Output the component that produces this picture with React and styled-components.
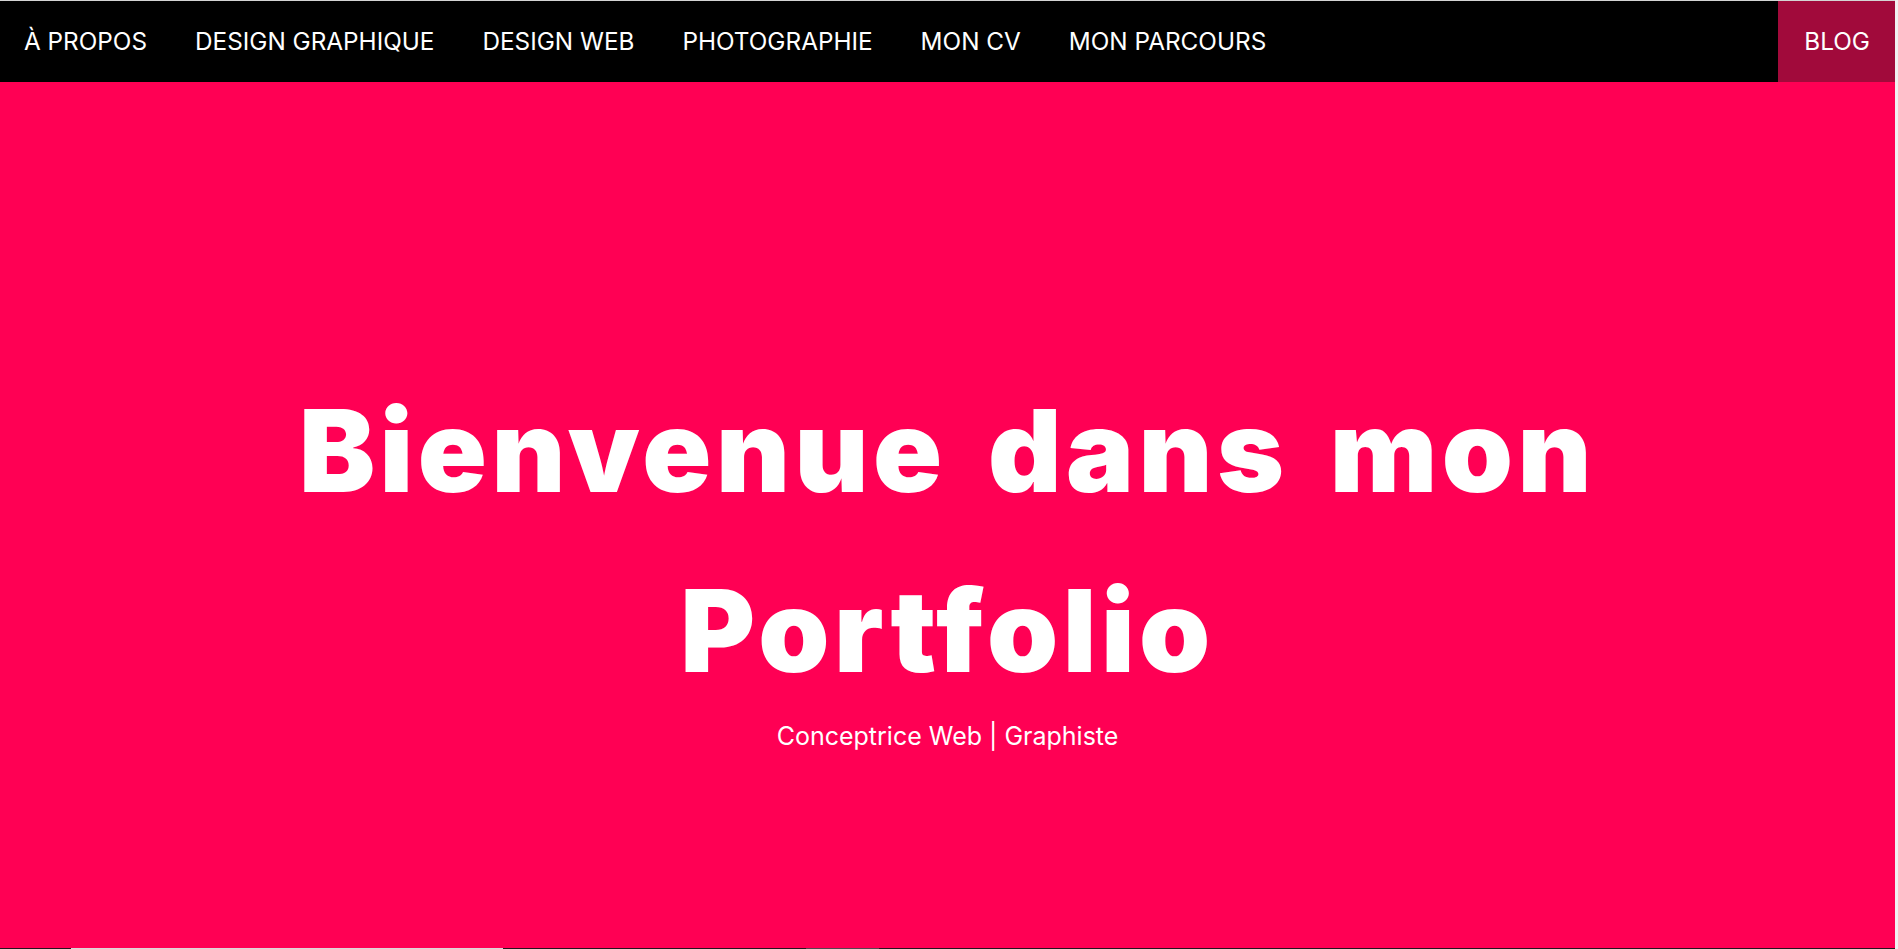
import React from "react";
import styled, { createGlobalStyle } from "styled-components";

const Global = createGlobalStyle`
  html, body { margin: 0; padding: 0; background: #f1f1f1; overflow: hidden; }
  body { font-family: Inter, "Noto Sans", sans-serif; }
  * { box-sizing: border-box; }
`;

const Page = styled.div`
  width: calc(100% - 3px);
  height: 949px;
  display: flex;
  flex-direction: column;
  overflow: hidden;
  border-top: 1px solid #d4d4d4;
`;

const NavBar = styled.nav`
  height: 81px;
  flex: 0 0 auto;
  background: #000;
  display: flex;
  align-items: stretch;
  justify-content: space-between;
`;

const NavList = styled.ul`
  list-style: none;
  margin: 0;
  padding: 0;
  display: flex;
  align-items: stretch;
`;

const NavItem = styled.li`
  display: flex;
`;

const NavLink = styled.a`
  display: flex;
  align-items: center;
  height: 100%;
  padding-bottom: 2px;
  color: #fff;
  text-decoration: none;
  font-family: Inter, sans-serif;
  font-size: 24.3px;
  font-weight: 400;
  background: ${(p) => (p.$accent ? "#a10a3b" : "transparent")};
  padding-left: ${(p) => (p.$accent ? "26px" : "24px")};
  padding-right: ${(p) => (p.$accent ? "25px" : "24px")};
`;

const Hero = styled.section`
  flex: 1 1 auto;
  background: #ff0054;
  display: flex;
  flex-direction: column;
  align-items: center;
  justify-content: center;
  color: #fff;
  text-align: center;
  padding-top: 82px;
`;

const Title = styled.h1`
  margin: 0;
  font-family: Inter, sans-serif;
  font-weight: 900;
  font-size: 114px;
  line-height: 180px;
  letter-spacing: 4.5px;
  word-spacing: 14px;
  font-variant-ligatures: none;
  font-feature-settings: "calt" 0, "liga" 0;
`;

const Subtitle = styled.p`
  margin: 0;
  font-family: Inter, sans-serif;
  font-weight: 400;
  font-size: 25px;
  line-height: 30px;
`;

const NextSection = styled.section`
  flex: 0 0 1px;
  background: #24141c;
  display: flex;
  padding-left: 71px;
`;

const Thumb = styled.div`
  width: ${(p) => p.$w}px;
  margin-right: ${(p) => p.$mr}px;
  background: ${(p) => p.$c};
`;

const items = [
  "À PROPOS",
  "DESIGN GRAPHIQUE",
  "DESIGN WEB",
  "PHOTOGRAPHIE",
  "MON CV",
  "MON PARCOURS",
];

export default function App() {
  return (
    <>
      <Global />
      <Page>
        <NavBar>
          <NavList>
            {items.map((t) => (
              <NavItem key={t}>
                <NavLink href="#">{t}</NavLink>
              </NavItem>
            ))}
          </NavList>
          <NavLink href="#" $accent>
            BLOG
          </NavLink>
        </NavBar>
        <Hero>
          <Title>
            Bienvenue dans mon
            <br />
            Portfolio
          </Title>
          <Subtitle>Conceptrice Web | Graphiste</Subtitle>
        </Hero>
        <NextSection>
          <Thumb $w={432} $mr={303} $c="#d9d9d9" />
          <Thumb $w={73} $mr={0} $c="#55474e" />
        </NextSection>
      </Page>
    </>
  );
}
